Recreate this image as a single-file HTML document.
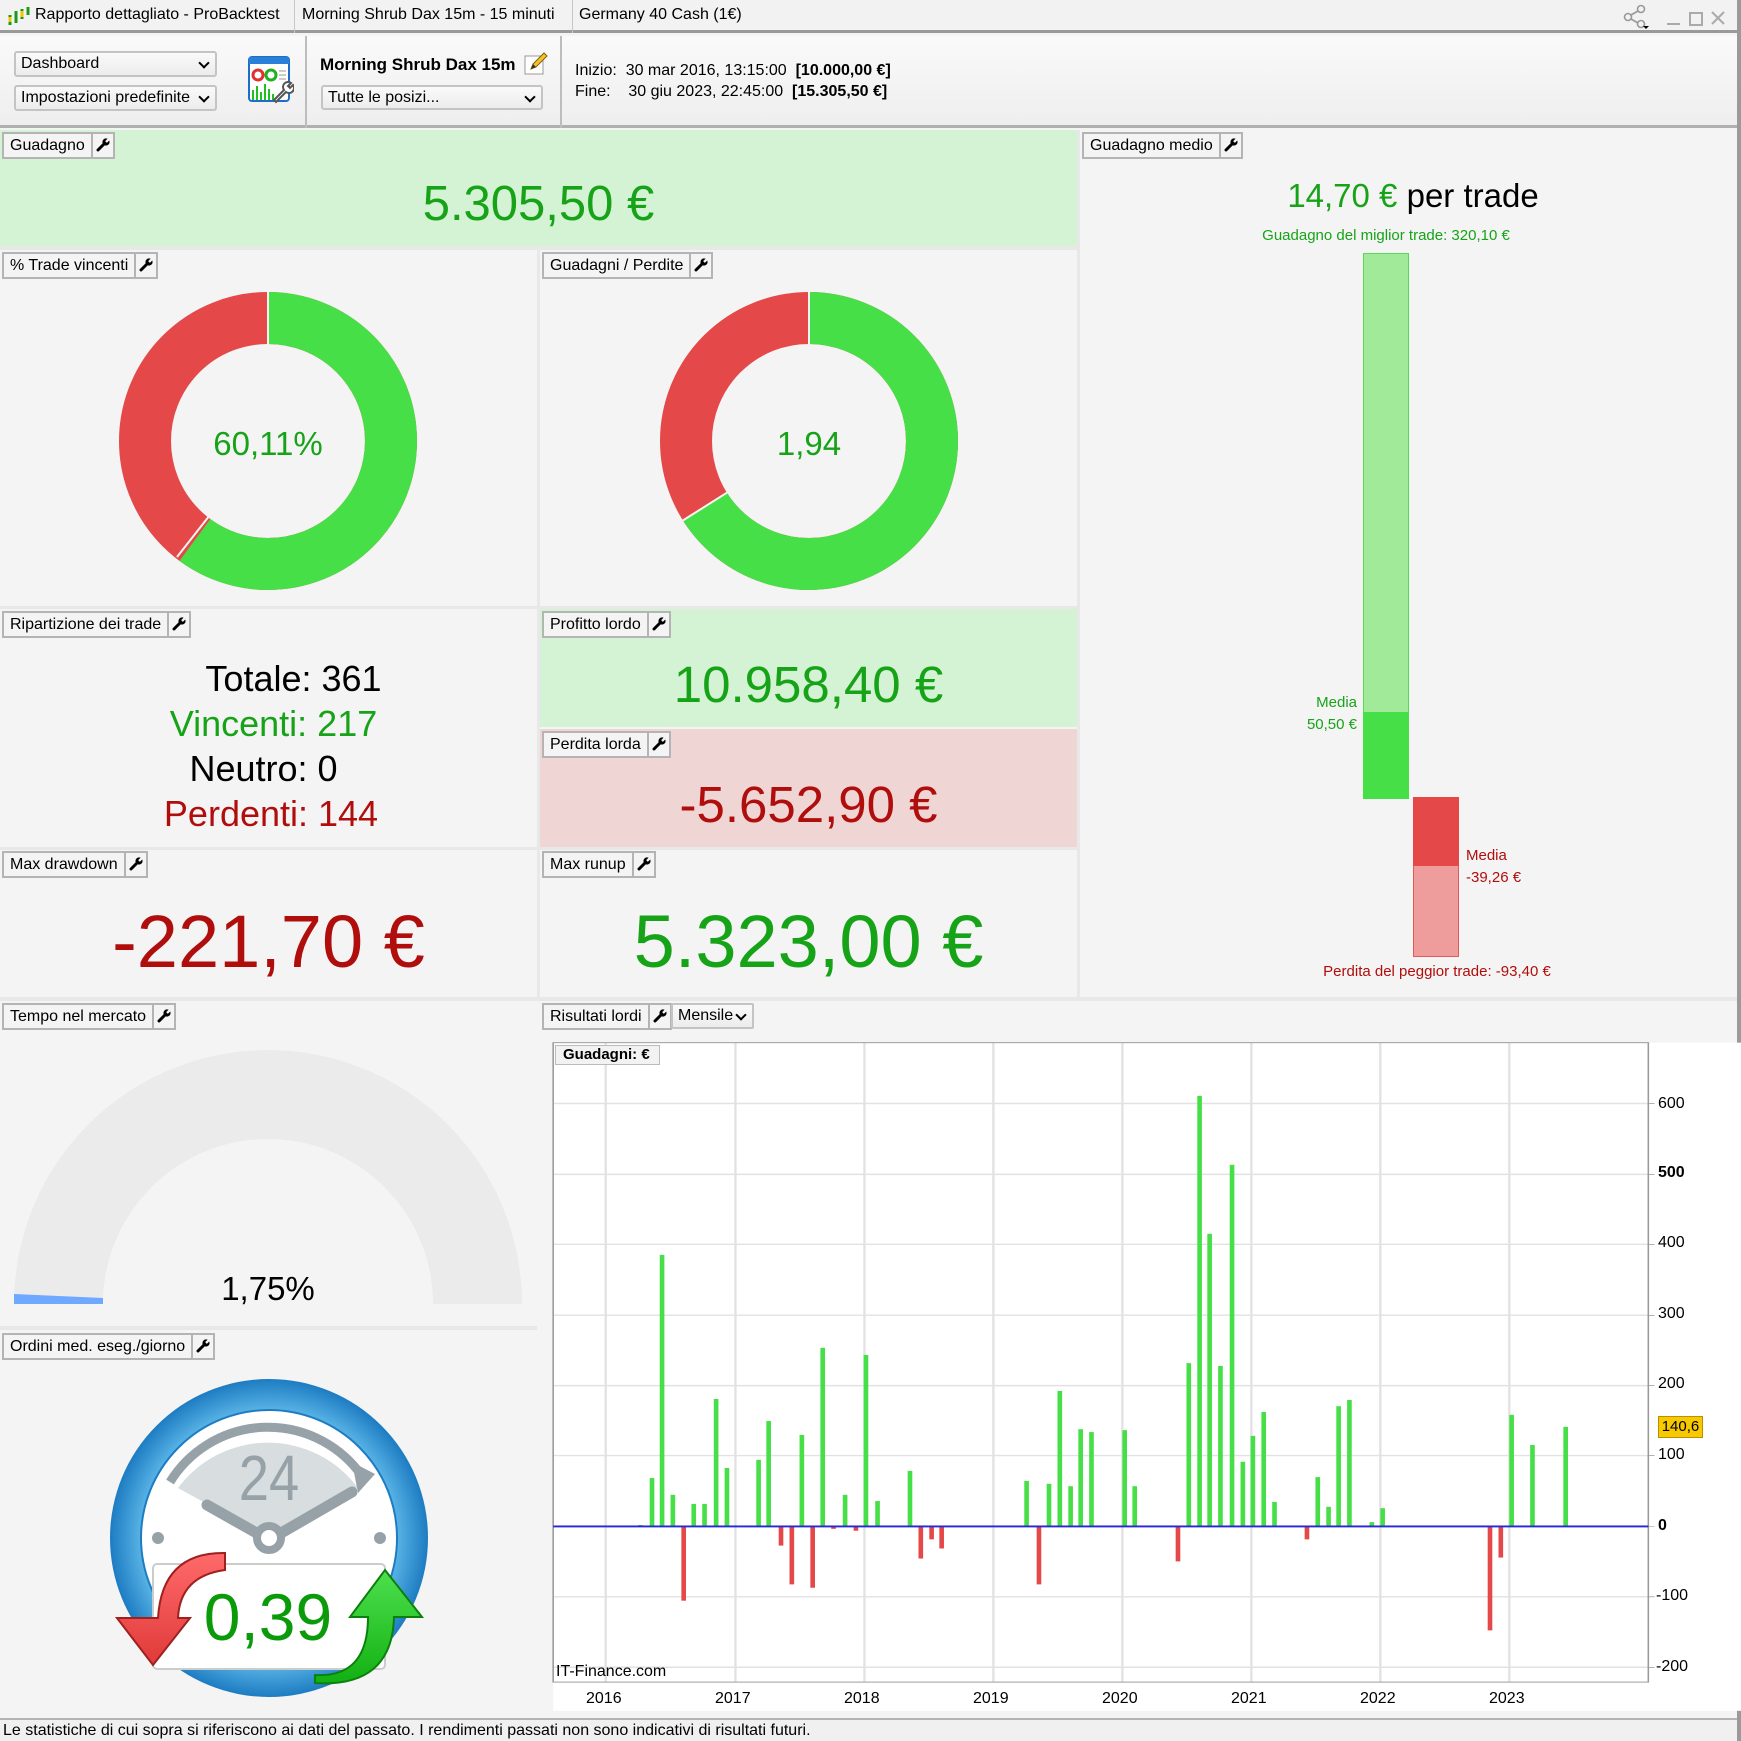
<!DOCTYPE html>
<html><head><meta charset="utf-8">
<style>
*{margin:0;padding:0;box-sizing:border-box}
body{width:1741px;height:1741px;position:relative;background:#f4f4f4;font-family:"Liberation Sans",Arial,sans-serif;overflow:hidden;color:#000}
.a{position:absolute}
.tab{position:absolute;height:27px;border:2px solid #b4b4b4;background:#f4f4f4;font-size:16px;line-height:23px;padding-left:6px;white-space:nowrap;display:flex}
.tab span.w{display:inline-block;width:22px;border-left:2px solid #b4b4b4;margin-left:6px;height:23px;position:relative}
.tab span.w svg{position:absolute;left:3px;top:4px}
.sel{position:absolute;border:2px solid #c4c4c4;border-radius:3px;background:linear-gradient(#fafafa,#ececec);font-size:16px;line-height:21px;padding-left:5px}
.sel:after{content:"";position:absolute;right:7px;top:6px;width:6px;height:6px;border-right:2px solid #000;border-bottom:2px solid #000;transform:rotate(45deg)}
.c{position:absolute;text-align:center;white-space:nowrap}
</style></head><body>
<svg width="0" height="0" style="position:absolute"><defs><symbol id="wr" viewBox="0 0 14 14"><path d="M2 12 L8 6" stroke="#000" stroke-width="3" stroke-linecap="round"/><circle cx="10" cy="4" r="3.6" fill="#000"/><path d="M10 4 L14 0" stroke="#f4f4f4" stroke-width="2.4"/></symbol></defs></svg>

<!-- title bar -->
<div class="a" style="left:0;top:0;width:1741px;height:33px;background:#f2f2f2;border-bottom:3px solid #9a9a9a"></div>
<svg class="a" style="left:7px;top:5px" width="24" height="22"><path d="M3 10v10M9 6v12M15 4v10M21 2v8" stroke="#1a9a1a" stroke-width="3"/><path d="M3 12v5M15 6v6" stroke="#f4c400" stroke-width="3"/></svg>
<div class="a" style="left:35px;top:6px;font-size:16px">Rapporto dettagliato - ProBacktest</div>
<div class="a" style="left:294px;top:0;width:1px;height:33px;background:#c8c8c8"></div>
<div class="a" style="left:302px;top:6px;font-size:16px">Morning Shrub Dax 15m - 15 minuti</div>
<div class="a" style="left:572px;top:0;width:1px;height:33px;background:#c8c8c8"></div>
<div class="a" style="left:579px;top:6px;font-size:16px">Germany 40 Cash (1€)</div>
<svg class="a" style="left:1622px;top:4px" width="116" height="26"><circle cx="19" cy="5" r="3.5" fill="none" stroke="#999" stroke-width="1.6"/><circle cx="6" cy="13" r="3.5" fill="none" stroke="#999" stroke-width="1.6"/><circle cx="19" cy="20" r="3.5" fill="none" stroke="#999" stroke-width="1.6"/><path d="M9 11l7-4M9 15l7 4" stroke="#999" stroke-width="1.6"/><path d="M21 22h6l-3 3z" fill="#000"/><path d="M45 20h13" stroke="#aaa" stroke-width="2"/><rect x="68" y="9" width="12" height="12" fill="none" stroke="#aaa" stroke-width="2"/><path d="M90 8l12 12M102 8l-12 12" stroke="#aaa" stroke-width="2"/></svg>
<div class="a" style="left:1737px;top:0;width:4px;height:1741px;background:#9a9a9a"></div>

<!-- toolbar -->
<div class="a" style="left:0;top:36px;width:1737px;height:92px;background:linear-gradient(#fafafa,#eeeeee);border-bottom:3px solid #b0b0b0"></div>
<div class="sel" style="left:14px;top:51px;width:203px;height:26px">Dashboard</div>
<div class="sel" style="left:14px;top:85px;width:203px;height:26px">Impostazioni predefinite</div>
<svg class="a" style="left:248px;top:56px" width="46" height="48"><rect x="1" y="1" width="40" height="44" rx="3" fill="#fff" stroke="#1c6fc8" stroke-width="2"/><rect x="1" y="1" width="40" height="7" fill="#2b7fd8"/><circle cx="10" cy="19" r="5" fill="none" stroke="#e03030" stroke-width="3"/><circle cx="23" cy="19" r="5" fill="none" stroke="#20b020" stroke-width="3"/><path d="M31 15h7M31 19h7M31 23h7" stroke="#999"/><path d="M5 44V34M9 44V30M13 44V36M17 44V28M21 44V33M25 44V38" stroke="#20c020" stroke-width="2"/><path d="M26 44l10-10a5 5 0 0 1 7-7l-3 3 2 2 3-3a5 5 0 0 1-7 7l-10 10z" fill="#fff" stroke="#555" stroke-width="2"/></svg>
<div class="a" style="left:305px;top:36px;width:2px;height:92px;background:#bdbdbd"></div>
<div class="a" style="left:320px;top:55px;font-size:17px;font-weight:bold">Morning Shrub Dax 15m</div>
<svg class="a" style="left:523px;top:50px" width="26" height="26"><rect x="2" y="6" width="18" height="18" fill="#fff" stroke="#999"/><path d="M8 19l2-5 11-11 3 3-11 11z" fill="#f2c230" stroke="#806000"/><path d="M8 19l2-5 3 3z" fill="#333"/></svg>
<div class="sel" style="left:321px;top:85px;width:222px;height:25px">Tutte le posizi...</div>
<div class="a" style="left:560px;top:36px;width:2px;height:92px;background:#bdbdbd"></div>
<div class="a" style="left:575px;top:60px;font-size:16px;line-height:21px;white-space:pre">Inizio:  30 mar 2016, 13:15:00  <b>[10.000,00 €]</b>
Fine:    30 giu 2023, 22:45:00  <b>[15.305,50 €]</b></div>

<!-- panels -->
<div class="a" style="left:0;top:130px;width:1077px;height:116px;background:#d4f2d4"></div>
<div class="tab" style="left:2px;top:132px">Guadagno<span class="w"><svg width="14" height="14"><use href="#wr"/></svg></span></div>
<div class="c" style="left:0;width:1077px;top:176px;font-size:49px;color:#17a317">5.305,50 €</div>

<div class="a" style="left:1077px;top:130px;width:3px;height:868px;background:#e8e8e8"></div>
<div class="tab" style="left:1082px;top:132px">Guadagno medio<span class="w"><svg width="14" height="14"><use href="#wr"/></svg></span></div>

<div class="a" style="left:0;top:246px;width:1077px;height:4px;background:#e8e8e8"></div>
<div class="a" style="left:537px;top:246px;width:3px;height:752px;background:#e8e8e8"></div>
<div class="tab" style="left:2px;top:252px">% Trade vincenti<span class="w"><svg width="14" height="14"><use href="#wr"/></svg></span></div>
<div class="tab" style="left:542px;top:252px">Guadagni / Perdite<span class="w"><svg width="14" height="14"><use href="#wr"/></svg></span></div>
<svg class="a" style="left:0;top:246px" width="1077" height="360">
<circle cx="268" cy="195" r="123" fill="none" stroke="#e54848" stroke-width="52"/>
<circle cx="268" cy="195" r="123" fill="none" stroke="#47df47" stroke-width="52" stroke-dasharray="464.5 1000" transform="rotate(-90 268 195)"/>
<path d="M268 45V98M268 195L177 311" stroke="#f4f4f4" stroke-width="2"/>
<circle cx="268" cy="195" r="96" fill="#f4f4f4"/>
<circle cx="809" cy="195" r="123" fill="none" stroke="#e54848" stroke-width="52"/>
<circle cx="809" cy="195" r="123" fill="none" stroke="#47df47" stroke-width="52" stroke-dasharray="510 1000" transform="rotate(-90 809 195)"/>
<path d="M809 45V98M809 195L682 275" stroke="#f4f4f4" stroke-width="2"/>
<circle cx="809" cy="195" r="96" fill="#f4f4f4"/>
</svg>
<div class="c" style="left:168px;width:200px;top:425px;font-size:33px;color:#17a317">60,11%</div>
<div class="c" style="left:709px;width:200px;top:425px;font-size:33px;color:#17a317">1,94</div>

<div class="a" style="left:0;top:606px;width:1077px;height:3px;background:#e8e8e8"></div>
<div class="tab" style="left:2px;top:611px">Ripartizione dei trade<span class="w"><svg width="14" height="14"><use href="#wr"/></svg></span></div>
<div class="a" style="left:0;top:656px;width:537px;font-size:36px;line-height:45px;text-align:center">
<div style="padding-left:50px">Totale: 361</div><div style="color:#17a317;padding-left:10px">Vincenti: 217</div><div style="margin-left:-10px">Neutro: 0</div><div style="color:#b00d0d;padding-left:5px">Perdenti: 144</div></div>
<div class="a" style="left:540px;top:609px;width:537px;height:118px;background:#d4f2d4"></div>
<div class="tab" style="left:542px;top:611px">Profitto lordo<span class="w"><svg width="14" height="14"><use href="#wr"/></svg></span></div>
<div class="c" style="left:540px;width:537px;top:655px;font-size:51px;color:#17a317">10.958,40 €</div>
<div class="a" style="left:540px;top:729px;width:537px;height:118px;background:#f0d5d5"></div>
<div class="tab" style="left:542px;top:731px">Perdita lorda<span class="w"><svg width="14" height="14"><use href="#wr"/></svg></span></div>
<div class="c" style="left:540px;width:537px;top:775px;font-size:51px;color:#b00d0d">-5.652,90 €</div>

<div class="a" style="left:0;top:847px;width:1077px;height:3px;background:#e8e8e8"></div>
<div class="tab" style="left:2px;top:851px">Max drawdown<span class="w"><svg width="14" height="14"><use href="#wr"/></svg></span></div>
<div class="tab" style="left:542px;top:851px">Max runup<span class="w"><svg width="14" height="14"><use href="#wr"/></svg></span></div>
<div class="c" style="left:0;width:537px;top:899px;font-size:74px;color:#b00d0d">-221,70 €</div>
<div class="c" style="left:540px;width:537px;top:899px;font-size:74px;color:#17a317">5.323,00 €</div>

<!-- guadagno medio -->
<div class="c" style="left:1213px;width:400px;top:177px;font-size:33px"><span style="color:#17a317">14,70 €</span> per trade</div>
<div class="c" style="left:1186px;width:400px;top:227px;font-size:15px;color:#17a317">Guadagno del miglior trade: 320,10 €</div>
<div class="a" style="left:1363px;top:253px;width:46px;height:459px;background:#a0ea9a;border:1px solid #5ad85a;border-bottom:none"></div>
<div class="a" style="left:1363px;top:712px;width:46px;height:87px;background:#47df47"></div>
<div class="a" style="left:1413px;top:797px;width:46px;height:69px;background:#e54848"></div>
<div class="a" style="left:1413px;top:866px;width:46px;height:91px;background:#ee9c9c;border:1px solid #e05a5a;border-top:none"></div>
<div class="a" style="left:1250px;width:107px;top:692px;font-size:15px;line-height:22px;color:#17a317;text-align:right">Media<br>50,50 €</div>
<div class="a" style="left:1466px;top:845px;font-size:15px;line-height:22px;color:#b00d0d">Media<br>-39,26 €</div>
<div class="c" style="left:1237px;width:400px;top:963px;font-size:15px;color:#b00d0d">Perdita del peggior trade: -93,40 €</div>

<div class="a" style="left:0;top:997px;width:1737px;height:4px;background:#e8e8e8"></div>

<!-- tempo nel mercato -->
<div class="tab" style="left:2px;top:1003px">Tempo nel mercato<span class="w"><svg width="14" height="14"><use href="#wr"/></svg></span></div>
<svg class="a" style="left:0;top:1040px" width="537" height="280">
<path d="M58.5 264 A209.5 209.5 0 0 1 477.5 264" fill="none" stroke="#ebebeb" stroke-width="89"/>
<path d="M14 254 L103 258 L103 264 L14 264 Z" fill="#6ea8ff"/>
</svg>
<div class="c" style="left:168px;width:200px;top:1270px;font-size:33px">1,75%</div>
<div class="a" style="left:0;top:1326px;width:537px;height:4px;background:#e8e8e8"></div>
<div class="tab" style="left:2px;top:1333px">Ordini med. eseg./giorno<span class="w"><svg width="14" height="14"><use href="#wr"/></svg></span></div>
<svg class="a" style="left:100px;top:1370px" width="340" height="340">
<defs><radialGradient id="bg1" cx="50%" cy="50%" r="50%"><stop offset="80%" stop-color="#5ab4e6"/><stop offset="100%" stop-color="#1d7cc2"/></radialGradient>
<linearGradient id="rg" x1="0" y1="0" x2="0" y2="1"><stop offset="0" stop-color="#ff6a6a"/><stop offset="1" stop-color="#e03a3a"/></linearGradient>
<linearGradient id="gg" x1="0" y1="0" x2="0" y2="1"><stop offset="0" stop-color="#4ee04e"/><stop offset="1" stop-color="#12b012"/></linearGradient></defs>
<circle cx="169" cy="168" r="159" fill="url(#bg1)"/>
<circle cx="169" cy="168" r="128" fill="#fff" stroke="#1d7cc2" stroke-width="2"/>
<path d="M78 118 A112 112 0 0 1 258 118 L169 168 Z" fill="#d8dddf"/>
<path d="M70 112 A115 115 0 0 1 262 106" fill="none" stroke="#97a2a8" stroke-width="9"/>
<path d="M252 92 L275 104 L258 123 Z" fill="#97a2a8"/>
<text x="169" y="130" font-family="Liberation Sans" font-size="64" fill="#97a2a8" text-anchor="middle" transform="translate(169 0) scale(0.85 1) translate(-169 0)">24</text>
<path d="M107 135 L169 170 L252 122" fill="none" stroke="#97a2a8" stroke-width="11" stroke-linecap="round"/>
<circle cx="169" cy="168" r="12" fill="#fff" stroke="#97a2a8" stroke-width="8"/>
<circle cx="58" cy="168" r="6" fill="#97a2a8"/><circle cx="280" cy="168" r="6" fill="#97a2a8"/>
<rect x="53" y="194" width="232" height="105" rx="4" fill="#fff" stroke="#ccc" stroke-width="2"/>
<path d="M125 183 Q62 182 58 248 L17 248 L53 295 L90 248 L78 248 Q80 206 125 200 Z" fill="url(#rg)" stroke="#a02020" stroke-width="2"/>
<path d="M215 305 Q268 308 268 247 L250 247 L285 200 L322 247 L294 247 Q292 318 215 313 Z" fill="url(#gg)" stroke="#0c800c" stroke-width="2"/>
</svg>
<div class="c" style="left:168px;width:200px;top:1579px;font-size:66px;color:#0a9a0a">0,39</div>

<!-- chart -->
<div class="tab" style="left:542px;top:1003px">Risultati lordi<span class="w" style="margin-right:0"><svg width="14" height="14"><use href="#wr"/></svg></span></div>
<div class="sel" style="left:671px;top:1003px;width:83px;height:26px;border-radius:2px">Mensile</div>
<svg class="a" style="left:530px;top:990px" width="1211" height="751" viewBox="0 0 1568 1568" preserveAspectRatio="none">
<rect x="30" y="110" width="1538" height="1395" fill="#fff"/>
<g stroke="#e2e2e2">
<path d="M30 237H1448M30 385H1448M30 531H1448M30 679H1448M30 826H1448M30 972H1448M30 1267H1448M30 1414H1448" stroke-width="3"/>
<path d="M98 110V1445M266 110V1445M433 110V1445M600 110V1445M767 110V1445M934 110V1445M1101 110V1445M1268 110V1445" stroke-width="3"/>
</g>
<g stroke="#666"><path d="M1448 237h8M1448 385h8M1448 531h8M1448 679h8M1448 826h8M1448 972h8M1448 1120h8M1448 1267h8M1448 1414h8"/></g>
<rect x="30" y="110" width="1418" height="1335" fill="none" stroke="#999" stroke-width="2"/>
<g fill="#47df47">
<rect x="140" y="1117" width="6" height="3"/><rect x="155" y="1019" width="6" height="101"/><rect x="168" y="553" width="6" height="567"/><rect x="182" y="1054" width="6" height="66"/><rect x="209" y="1073" width="6" height="47"/><rect x="223" y="1073" width="6" height="47"/><rect x="238" y="854" width="6" height="266"/><rect x="252" y="998" width="6" height="122"/><rect x="293" y="981" width="6" height="139"/><rect x="306" y="900" width="6" height="220"/><rect x="349" y="929" width="6" height="191"/><rect x="376" y="747" width="6" height="373"/><rect x="405" y="1054" width="6" height="66"/><rect x="432" y="762" width="6" height="358"/><rect x="447" y="1067" width="6" height="53"/><rect x="489" y="1004" width="6" height="116"/><rect x="640" y="1025" width="6" height="95"/><rect x="669" y="1031" width="6" height="89"/><rect x="683" y="837" width="6" height="283"/><rect x="697" y="1036" width="6" height="84"/><rect x="710" y="917" width="6" height="203"/><rect x="724" y="923" width="6" height="197"/><rect x="767" y="919" width="6" height="201"/><rect x="780" y="1036" width="6" height="84"/><rect x="850" y="779" width="6" height="341"/><rect x="864" y="221" width="6" height="899"/><rect x="877" y="509" width="6" height="611"/><rect x="891" y="785" width="6" height="335"/><rect x="906" y="365" width="6" height="755"/><rect x="920" y="985" width="6" height="135"/><rect x="933" y="931" width="6" height="189"/><rect x="947" y="881" width="6" height="239"/><rect x="961" y="1069" width="6" height="51"/><rect x="1017" y="1017" width="6" height="103"/><rect x="1031" y="1079" width="6" height="41"/><rect x="1044" y="869" width="6" height="251"/><rect x="1058" y="856" width="6" height="264"/><rect x="1087" y="1111" width="6" height="9"/><rect x="1101" y="1082" width="6" height="38"/><rect x="1268" y="887" width="6" height="233"/><rect x="1295" y="950" width="6" height="170"/><rect x="1338" y="912" width="6" height="208"/>
</g>
<g fill="#e54848">
<rect x="196" y="1121" width="6" height="154"/><rect x="322" y="1121" width="6" height="39"/><rect x="336" y="1121" width="6" height="120"/><rect x="363" y="1121" width="6" height="127"/><rect x="390" y="1121" width="6" height="4"/><rect x="419" y="1121" width="6" height="8"/><rect x="503" y="1121" width="6" height="66"/><rect x="517" y="1121" width="6" height="26"/><rect x="530" y="1121" width="6" height="45"/><rect x="656" y="1121" width="6" height="120"/><rect x="836" y="1121" width="6" height="72"/><rect x="1003" y="1121" width="6" height="26"/><rect x="1240" y="1121" width="6" height="216"/><rect x="1254" y="1121" width="6" height="64"/>
</g>
<rect x="30" y="1118" width="1418" height="4" fill="#2828d8"/>
</svg>
<div class="a" style="left:555px;top:1045px;width:105px;height:20px;border:1px solid #bbb;background:#f2f2f2;font-size:15px;font-weight:bold;line-height:18px;padding-left:7px">Guadagni: €</div>
<div class="a" style="left:556px;top:1663px;font-size:16px">IT-Finance.com</div>
<div class="a" style="left:1658px;top:1416px;width:45px;height:22px;background:#f8c800;border:1px solid #b89000;font-size:15px;line-height:20px;text-align:center">140,6</div>
<div class="a" style="left:1658px;top:1093px;font-size:16px;line-height:22px">600</div>
<div class="a" style="left:1658px;top:1164px;font-size:16px;font-weight:bold">500</div>
<div class="a" style="left:1658px;top:1234px;font-size:16px">400</div>
<div class="a" style="left:1658px;top:1305px;font-size:16px">300</div>
<div class="a" style="left:1658px;top:1375px;font-size:16px">200</div>
<div class="a" style="left:1658px;top:1446px;font-size:16px">100</div>
<div class="a" style="left:1658px;top:1517px;font-size:16px;font-weight:bold">0</div>
<div class="a" style="left:1656px;top:1587px;font-size:16px">-100</div>
<div class="a" style="left:1656px;top:1658px;font-size:16px">-200</div>
<div class="a" style="left:586px;top:1690px;font-size:16px">2016</div>
<div class="a" style="left:715px;top:1690px;font-size:16px">2017</div>
<div class="a" style="left:844px;top:1690px;font-size:16px">2018</div>
<div class="a" style="left:973px;top:1690px;font-size:16px">2019</div>
<div class="a" style="left:1102px;top:1690px;font-size:16px">2020</div>
<div class="a" style="left:1231px;top:1690px;font-size:16px">2021</div>
<div class="a" style="left:1360px;top:1690px;font-size:16px">2022</div>
<div class="a" style="left:1489px;top:1690px;font-size:16px">2023</div>

<!-- footer -->
<div class="a" style="left:0;top:1718px;width:1737px;height:23px;background:#f0f0f0;border-top:2px solid #b4b4b4"></div>
<div class="a" style="left:3px;top:1722px;font-size:16px">Le statistiche di cui sopra si riferiscono ai dati del passato. I rendimenti passati non sono indicativi di risultati futuri.</div>
</body></html>
